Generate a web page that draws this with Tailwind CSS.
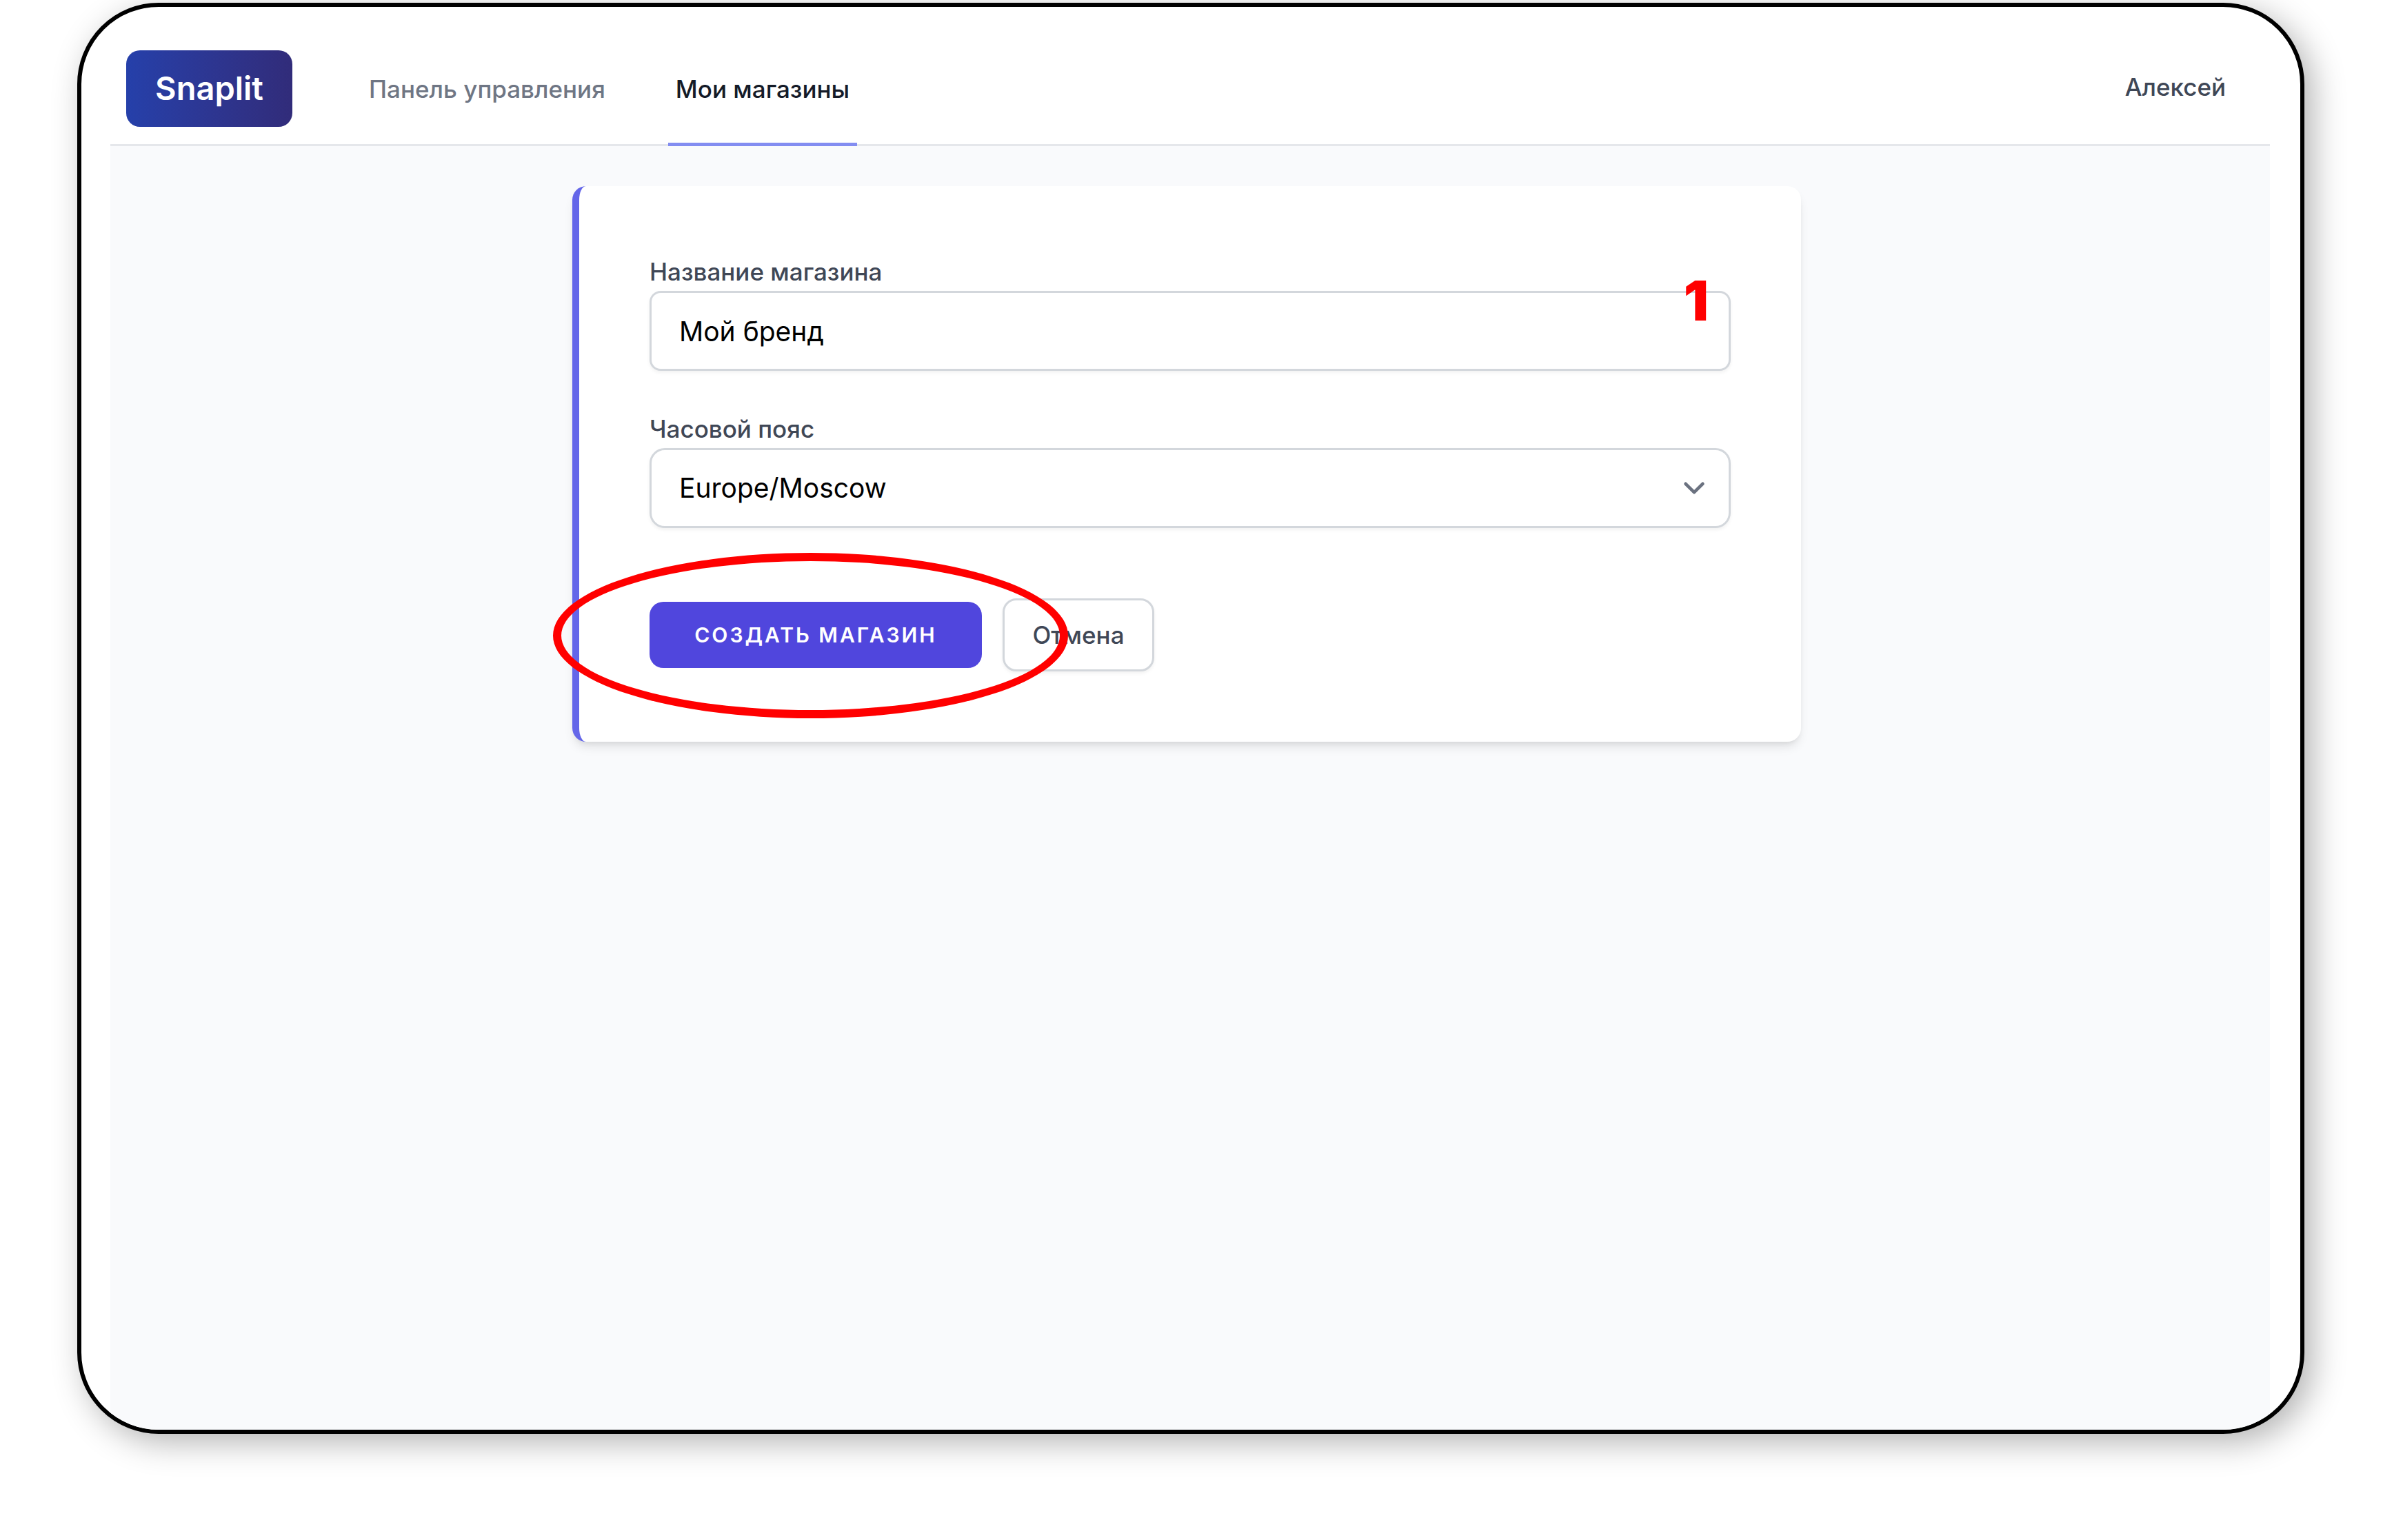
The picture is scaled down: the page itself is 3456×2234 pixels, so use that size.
<!DOCTYPE html>
<html lang="ru">
<head>
    <meta charset="UTF-8">
    <meta name="viewport" content="width=device-width, initial-scale=1.0">
    <title>Snaplit</title>
    <script src="https://cdn.jsdelivr.net/npm/@tailwindcss/browser@4"></script>
</head>
<body class="bg-white font-['Inter',sans-serif]">
    <div class="min-h-screen flex flex-col pt-1 pb-[154px] pl-[112px] pr-[114px]">
        <!-- Window frame -->
        <div class="flex-1 flex flex-col bg-white border-6 border-black rounded-[118px] overflow-hidden pl-[42px] pr-[44px] shadow-[12px_12px_48px_rgba(0,0,0,0.3)]">

            <!-- Top navigation -->
            <header class="flex items-stretch justify-between border-b-3 border-[#e5e7eb] pt-[38px] pl-[23px] pr-[64px]">
                <div class="flex items-stretch">
                    <a href="#" class="my-[25px] w-[241px] h-[111px] flex items-center justify-center rounded-[20px] bg-linear-to-r from-[#2540aa] to-[#312c7a] text-white text-[47px] font-semibold">Snaplit</a>
                    <nav class="flex items-stretch gap-[80px] ml-[100px] text-[35px] leading-[44px] font-medium">
                        <a href="#" class="flex items-center px-[11px] text-[#6f7684]">Панель управления</a>
                        <a href="#" class="flex items-center px-[11px] pt-0.5 -mb-[3px] border-b-5 border-[#838df1] text-[#151b28]" aria-current="page">Мои магазины</a>
                    </nav>
                </div>
                <button type="button" class="pb-1.5 text-[35px] leading-[44px] font-medium text-[#3f4756]">Алексей</button>
            </header>

            <!-- Content -->
            <main class="flex-1 bg-[#f9fafc] pt-[58px] pr-[10px]">
                <form class="mx-auto max-w-[1782px] bg-white border-l-10 border-[#6466e9] rounded-[20px] p-[102px] shadow-[0_10px_15px_-3px_rgba(0,0,0,0.1),0_5px_10px_-5px_rgba(0,0,0,0.1)]">
                    <div class="relative flex flex-col gap-1.5">
                        <label for="store-name" class="text-[35px] leading-[44px] font-medium text-[#3f4756]">Название магазина</label>
                        <input id="store-name" type="text" value="Мой бренд" class="w-full h-[116px] px-[40px] bg-white border-3 border-[#d3d7dc] rounded-[16px] text-[39px] text-black shadow-[0_3px_5px_rgba(0,0,0,0.05)]">
                        <span class="absolute right-[32px] top-[22px] text-[80px] leading-[84px] font-black text-[#ff0000]">1</span>
                    </div>

                    <div class="flex flex-col gap-1.5 mt-[62px]">
                        <label for="timezone" class="text-[35px] leading-[44px] font-medium text-[#3f4756]">Часовой пояс</label>
                        <div class="relative">
                            <select id="timezone" class="appearance-none block w-full h-[116px] px-[40px] bg-white border-3 border-[#d3d7dc] rounded-[22px] text-[39px] text-black shadow-[0_3px_5px_rgba(0,0,0,0.05)]">
                                <option>Europe/Moscow</option>
                            </select>
                            <svg class="absolute right-[22px] top-[27px] size-[62px] pointer-events-none" viewBox="0 0 20 20" fill="none" stroke="#6b7280" stroke-width="1.5" stroke-linecap="round" stroke-linejoin="round">
                                <path d="M6 8l4 4 4-4"/>
                            </svg>
                        </div>
                    </div>

                    <div class="flex items-center gap-[30px] mt-[102px]">
                        <div class="relative">
                            <button type="submit" class="w-[482px] h-[96px] block rounded-[20px] bg-[#5046dd] text-white text-[30px] font-semibold tracking-widest uppercase">Создать магазин</button>
                            <!-- Highlight ring -->
                            <div class="absolute z-10 -left-[140px] -right-[125px] -top-[71px] -bottom-[73px] border-12 border-[#ff0000] rounded-[50%] pointer-events-none"></div>
                        </div>
                        <button type="button" class="w-[220px] h-[106px] bg-white border-3 border-[#d3d7dc] rounded-[20px] text-[35px] font-medium text-[#3f4756] shadow-[0_3px_5px_rgba(0,0,0,0.05)]">Отмена</button>
                    </div>
                </form>
            </main>
        </div>
    </div>
</body>
</html>
